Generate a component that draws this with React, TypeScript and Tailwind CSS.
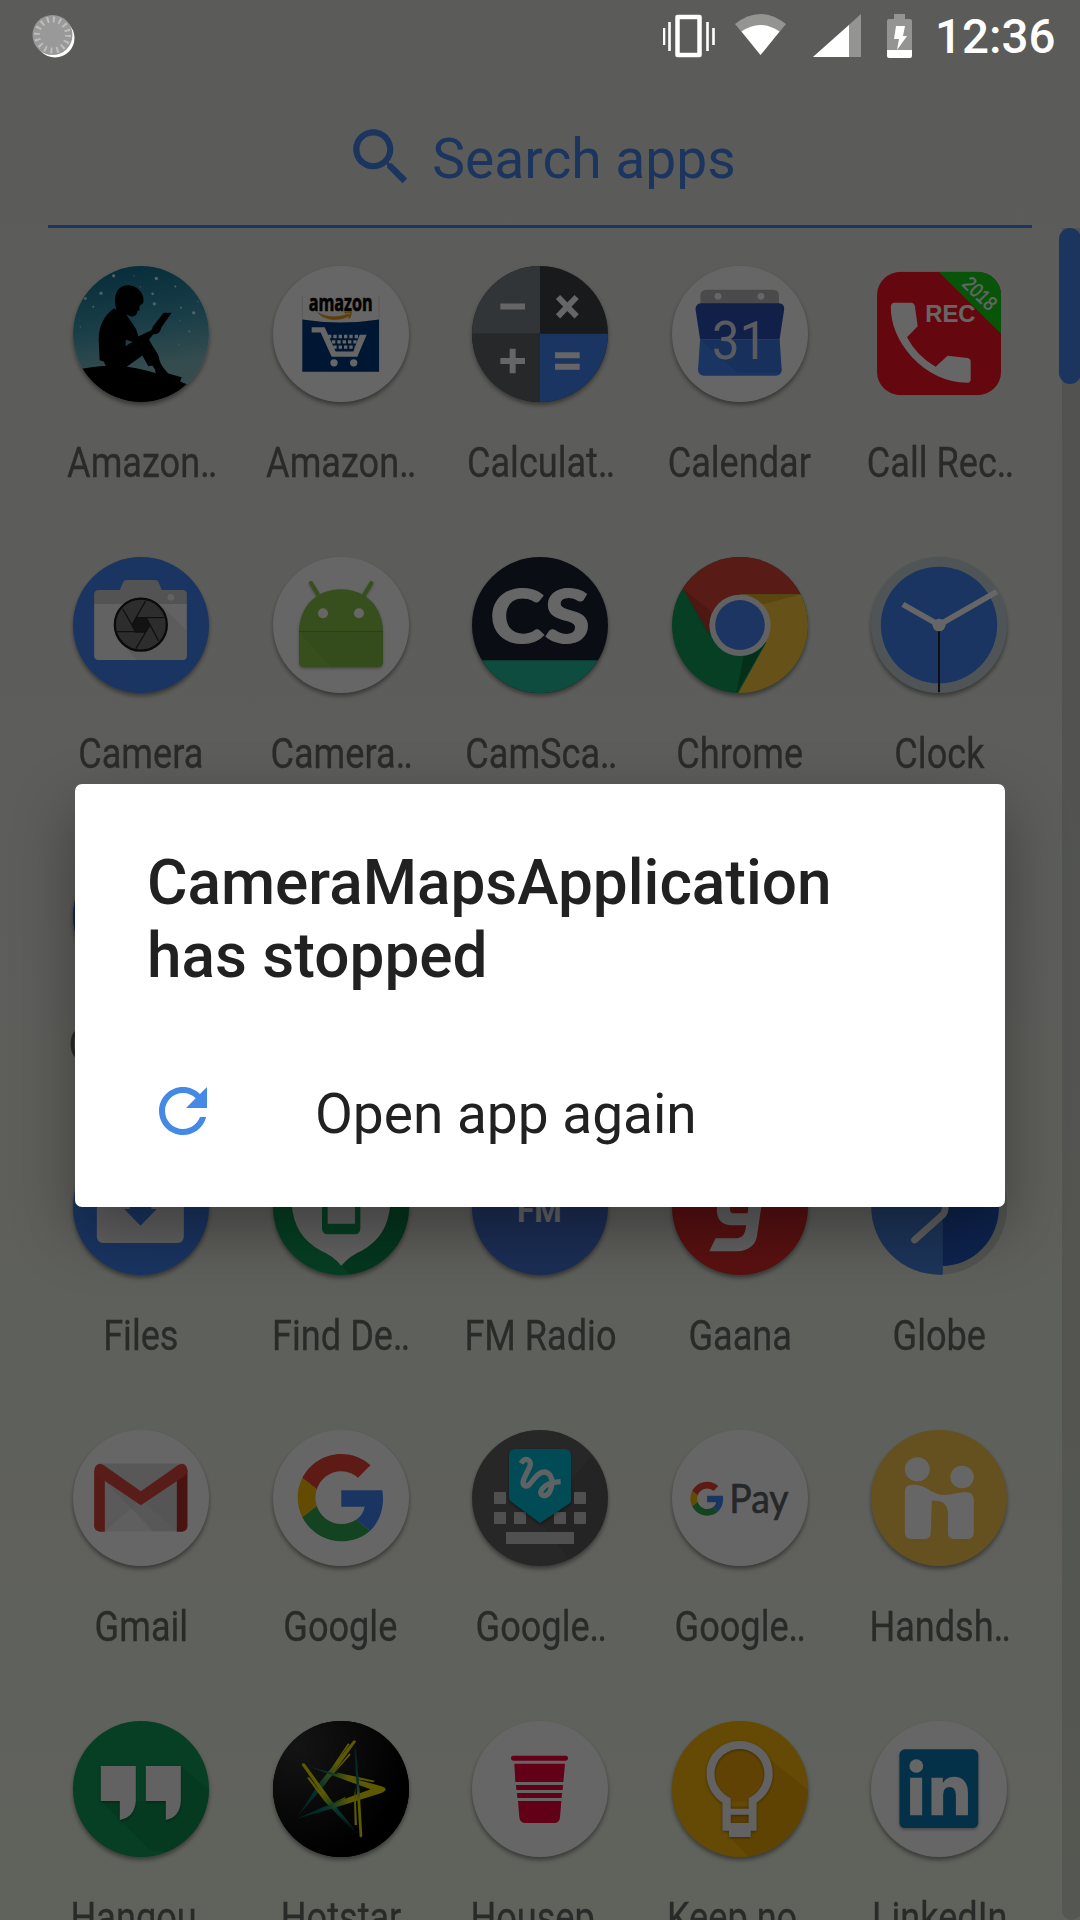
import React from "react";

type FrameProps = {
  x: number;
  y: number;
  bg?: string;
  wide?: boolean;
  bare?: boolean;
  children?: React.ReactNode;
};

/* Launcher icon: a 136px disc whose artwork is drawn on a fine grid with origin (x, y). */
function Disc({ x, y, bg = "#ffffff", wide, bare, children }: FrameProps) {
  const sx = wide ? 0.34439 : 0.33333;
  return (
    <div
      className={
        bare
          ? "size-[136px] shrink-0"
          : "size-[136px] shrink-0 overflow-hidden rounded-full shadow-[0_3px_4px_rgba(0,0,0,0.4)]"
      }
      style={bare ? undefined : { backgroundColor: bg }}
    >
      <svg viewBox="0 0 136 136" className="block size-full">
        <g transform={`scale(${sx} 0.33333) translate(${-x} ${-y})`}>{children}</g>
      </svg>
    </div>
  );
}

function GoogleMark() {
  return (
    <>
      <path fill="#EA4335" d="M24 9.5c3.54 0 6.71 1.22 9.21 3.6l6.85-6.85C35.9 2.38 30.47 0 24 0 14.62 0 6.51 5.38 2.56 13.22l7.98 6.19C12.43 13.72 17.74 9.5 24 9.5z" />
      <path fill="#4285F4" d="M46.98 24.55c0-1.57-.15-3.09-.38-4.55H24v9.02h12.94c-.58 2.96-2.26 5.48-4.78 7.18l7.73 6c4.51-4.18 7.09-10.36 7.09-17.65z" />
      <path fill="#FBBC05" d="M10.53 28.59c-.48-1.45-.76-2.99-.76-4.59s.27-3.14.76-4.59l-7.98-6.19C.92 16.46 0 20.12 0 24c0 3.88.92 7.54 2.56 10.78l7.97-6.19z" />
      <path fill="#34A853" d="M24 48c6.48 0 11.93-2.13 15.89-5.81l-7.73-6c-2.15 1.45-4.92 2.3-8.16 2.3-6.26 0-11.57-4.22-13.47-9.91l-7.98 6.19C6.51 42.62 14.62 48 24 48z" />
    </>
  );
}

const Kindle = () => (
  <Disc x={100} y={79.5}>
    <defs>
      <linearGradient id="sky" x1="0" y1="0" x2="0.15" y2="1">
        <stop offset="0" stopColor="#0a6a8e" />
        <stop offset="0.45" stopColor="#3c98b0" />
        <stop offset="0.8" stopColor="#84bfc6" />
      </linearGradient>
    </defs>
    <rect x="90" y="70" width="430" height="430" fill="url(#sky)" />
    <g fill="#d4f0f5">
      <circle cx="222" cy="109" r="5" /><circle cx="350" cy="117" r="5" /><circle cx="184" cy="161" r="5" />
      <circle cx="344" cy="193" r="5" /><circle cx="462" cy="220" r="5" /><circle cx="137" cy="177" r="4" />
      <circle cx="407" cy="141" r="3" /><circle cx="339" cy="163" r="4" /><circle cx="424" cy="205" r="3" />
      <circle cx="161" cy="202" r="3" /><circle cx="283" cy="109" r="2" /><circle cx="449" cy="276" r="3" />
      <circle cx="421" cy="244" r="2" /><circle cx="302" cy="142" r="2" /><circle cx="418" cy="316" r="2" />
      <circle cx="475" cy="187" r="2" /><circle cx="122" cy="262" r="2" />
    </g>
    <path d="M90 396Q200 368 290 386Q370 402 445 436L500 600H90Z" />
    <path d="M222 207L230 210C222 178 225 140 262 137C297 136 316 166 311 190L299 200L300 212L294 214C292 228 283 233 272 230L260 224C272 247 292 262 296 291L335 272L340 260L372 220H396L365 264C362 281 350 285 341 284L328 300C340 325 357 340 359 360C362 374 373 388 386 402L426 413L420 430L350 412L346 390L338 378L326 380L308 348L255 386H202L192 366L180 362L177 300C178 258 192 230 222 207Z" />
    <path d="M258 300L272 305Q284 306 270 312L258 320Z" fill="#4c98a6" />
  </Disc>
);

const AmazonShop = () => (
  <Disc x={697} y={79.5}>
    <path d="M785 168V397M1015 168V397" stroke="#e2e2e2" strokeWidth="3" />
    <path d="M785 240Q900 258 1015 240V397H785Z" fill="#023a80" />
    <text x="804" y="216" fontFamily="Open Sans" fontWeight="700" fontSize="68" textLength="192" lengthAdjust="spacingAndGlyphs" fill="#050505" stroke="#050505" strokeWidth="2">amazon</text>
    <path d="M831 219C855 246 900 245 927 228L924 223C898 234 860 237 831 219Z" fill="#f09a12" stroke="#f09a12" strokeWidth="2" />
    <path d="M912 221Q922 216 931 218Q932 228 924 237" fill="none" stroke="#f09a12" strokeWidth="5" />
    <path d="M813 263H852L885 336H938L957 286H978L950 352H873L840 279H813Z" fill="#fff" />
    <path d="M862 291H956M874 307H950M878 323H944" stroke="#fff" strokeWidth="10" strokeDasharray="10 6" />
    <circle cx="880" cy="370" r="11" fill="#fff" /><circle cx="939" cy="370" r="11" fill="#fff" />
  </Disc>
);

const Calculator = () => (
  <Disc x={1296} y={79} bg="#3f4144">
    <path d="M1290 70H1500V282H1290Z" fill="#7a8489" />
    <path d="M1290 282H1500V500H1290Z" fill="#626467" />
    <path d="M1500 282H1720V500H1500Z" fill="#4285f4" />
    <g stroke="#fff" strokeWidth="18" fill="none">
      <path d="M1381 200.500H1455M1381 364H1455M1418 327V401" />
      <path d="M1554 172L1610 230M1610 172L1554 230M1545 347H1619M1545 381H1619" />
    </g>
  </Disc>
);

const Calendar = () => (
  <Disc x={381.5} y={79} wide>
    <rect x="464" y="150" width="228" height="70" rx="16" fill="#b9b9b9" />
    <circle cx="515" cy="170" r="10" fill="#fff" /><circle cx="640" cy="170" r="10" fill="#fff" />
    <path d="M466 191H692Q709 192 707 210L694 299H463L450 210Q449 193 466 191Z" fill="#2a50b4" />
    <path d="M463 299H694L700 392Q699 407 684 408H473Q458 406 457 392Z" fill="#4285f4" />
    <path d="M463 299L572 400H684Q700 404 700 392L694 299Z" fill="#1c50a8" opacity=".18" />
    <text x="498" y="357" fontFamily="Roboto" fontWeight="400" fontSize="160" textLength="160" lengthAdjust="spacingAndGlyphs" fill="#dfe3ec">31</text>
  </Disc>
);

const CallRecorder = () => (
  <Disc x={961.5} y={79} wide bare>
    <clipPath id="rec"><rect x="979" y="96" width="360" height="371" rx="70" /></clipPath>
    <g clipPath="url(#rec)">
      <rect x="979" y="96" width="360" height="371" fill="#fd1224" />
      <path d="M1158 96H1340V283Z" fill="#14d314" />
      <text x="1119" y="248" fontFamily="Liberation Sans" fontWeight="700" fontSize="72" textLength="146" lengthAdjust="spacingAndGlyphs" fill="#fff">REC</text>
      <text transform="translate(1223 136) rotate(45)" fontFamily="Liberation Sans" fontSize="60" textLength="113" lengthAdjust="spacingAndGlyphs" fill="#fff" stroke="#fff" strokeWidth="1">2018</text>
      <path d="M1030 189H1077Q1088 190 1089 200L1097 260L1066 293Q1095 350 1149 381L1184 348L1242 355Q1251 357 1251 366V420Q1250 430 1240 429Q1150 428 1080 352Q1018 280 1019 200Q1020 190 1030 189Z" fill="#fff" />
    </g>
  </Disc>
);

const Camera = () => (
  <Disc x={99.5} y={81} bg="#4285f4">
    <path d="M240 180L250 156Q253 150 260 150H346Q353 150 356 156L366 180H430Q441 181 441 192V222H163V192Q164 181 175 180Z" fill="#cfcfcf" />
    <path d="M163 222H441V378Q440 389 430 390H175Q164 389 163 378Z" fill="#f5f5f5" />
    <path d="M370 230L441 303V378Q440 389 430 390H290L255 350Z" fill="#d8d8d8" opacity=".55" />
    <circle cx="393" cy="202" r="10" fill="#f5f5f5" />
    <circle cx="303" cy="284" r="78" fill="#707070" stroke="#191919" strokeWidth="7" />
    <path d="M275 284L289 261H316L331 284L317 308H289Z" fill="#303030" />
    <path d="M318 212L277 284M374 263H287M356 332L318 261M288 356L331 284M231 305H318M249 237L289 308" stroke="#2a2a2a" strokeWidth="4" fill="none" />
  </Disc>
);

const CameraMaps = () => (
  <Disc x={696} y={80}>
    <g style={{ filter: "drop-shadow(0 4px 4px rgba(0,0,0,.3))" }}>
      <path d="M810 158L835 199M991 158L966 199" stroke="#8bc34a" strokeWidth="12" strokeLinecap="round" />
      <path d="M774 303C776 225 830 177 900 177S1024 225 1026 303V396Q1025 411 1011 411H789Q775 411 774 396Z" fill="#8bc34a" />
    </g>
    <path d="M774 304L870 411H1011Q1025 411 1026 396V304Z" fill="#5f9a2e" opacity=".18" />
    <path d="M774 303H1026" stroke="#679a38" strokeWidth="3" />
    <circle cx="846" cy="249" r="15" fill="#fff" /><circle cx="954" cy="249" r="15" fill="#fff" />
  </Disc>
);

const CamScanner = () => (
  <Disc x={1296} y={81} bg="#1a2533">
    <rect x="1280" y="391" width="440" height="110" fill="#27bfa0" />
    <text x="1350" y="339" fontFamily="Lato" fontWeight="900" fontSize="222" textLength="300" lengthAdjust="spacingAndGlyphs" fill="#fff" stroke="#fff" strokeWidth="3">CS</text>
  </Disc>
);

const Chrome = () => (
  <Disc x={381.5} y={81} wide bg="#0f9d58">
    <path d="M414 176L490 310L579 193H756L800 60H380Z" fill="#db4437" />
    <path d="M579 193H756L800 300L700 500H568L655 338Z" fill="#ffcd40" />
    <path d="M600 193H756L640 225Z" fill="#c88a10" opacity=".45" />
    <path d="M414 176L490 320L500 250Z" fill="#9a2a20" opacity=".35" />
    <path d="M655 335L568 490L590 375Z" fill="#05542c" opacity=".5" />
    <ellipse cx="579" cy="286" rx="89" ry="92" fill="#f5f5f5" />
    <ellipse cx="579" cy="285" rx="72" ry="75" fill="#4a86f5" />
  </Disc>
);

const Clock = () => (
  <Disc x={961.5} y={81} wide bg="#c6d2d8">
    <ellipse cx="1159" cy="285" rx="169" ry="175" fill="#4285f4" />
    <path d="M1327 185L1159 285L1054 223" fill="none" stroke="#fff" strokeWidth="17" />
    <path d="M1159 285V487" stroke="#26262b" strokeWidth="6" />
    <circle cx="1159" cy="285" r="19" fill="#fff" />
  </Disc>
);

const Contacts = () => <Disc x={0} y={0} bg="#2a5fd0" />;

const Files = () => (
  <Disc x={99.5} y={-151} bg="#4285f4">
    <path d="M171 -70H432V142Q431 160 413 161H190Q172 160 171 142Z" fill="#f2f2f2" />
    <path d="M270 0H334V59H351L302 109L253 59H270Z" fill="#4285f4" />
  </Disc>
);

const FindDevice = () => (
  <Disc x={696} y={-153} bg="#0f9d58">
    <path d="M901 227L1060 385L1110 200V50H1040Z" fill="#08703c" opacity=".45" />
    <path d="M752 40Q758 140 840 182Q875 196 901 227Q927 196 962 182Q1042 140 1048 40Z" fill="#f5f5f5" />
    <path d="M843 20H958V116Q957 132 942 133H860Q844 132 843 116ZM860 20V101H942V20Z" fill="#0f9d58" fillRule="evenodd" />
  </Disc>
);

const FmRadio = () => (
  <Disc x={1296} y={-151} bg="#4873d8">
    <text x="1431" y="97" fontFamily="Roboto" fontWeight="700" fontSize="100" textLength="134" lengthAdjust="spacingAndGlyphs" fill="#fff">FM</text>
  </Disc>
);

const Gaana = () => (
  <Disc x={381.5} y={-153} wide bg="#e02c2c">
    <path d="M512 0V66Q515 104 555 106H597Q594 143 572 145H508L490 184H570Q620 180 628 140L648 0H611L601 70H562Q549 70 550 56V0Z" fill="#f5f5f5" />
  </Disc>
);

const Globe = () => (
  <Disc x={961.5} y={-153} wide bare>
    <ellipse cx="1160" cy="50" rx="197" ry="204" fill="#000" opacity=".12" />
    <ellipse cx="1168" cy="52" rx="165" ry="176" fill="#2459c2" />
    <path d="M1170 -154H1160A198 204 0 0 0 1160 254H1170Z" fill="#4a86e0" />
    <path d="M1088 150L1172 72Q1180 60 1176 30" fill="none" stroke="#f5f5f5" strokeWidth="20" strokeLinecap="round" />
  </Disc>
);

const Gmail = () => (
  <Disc x={99.5} y={61}>
    <path d="M178 162H430V365H178Z" fill="#e2e2e2" />
    <path d="M195 365L303 270L411 365Z" fill="#eeeeee" />
    <path d="M178 162H430L303 250Z" fill="#dcdcdc" />
    <path d="M195 215L340 365H411V210L303 286Z" fill="#bdbdbd" opacity=".35" />
    <path d="M163 185H195V366H180Q164 365 163 350Z" fill="#d5443a" />
    <path d="M411 200L443 180V350Q442 365 427 366H411Z" fill="#b5302a" />
    <path d="M163 184Q164 165 180 162Q185 162 192 167L303 245L414 167Q422 162 430 163Q442 166 443 184Q442 194 433 200L303 287L174 200Q164 194 163 184Z" fill="#db4a3f" />
  </Disc>
);

const Google = () => (
  <Disc x={696} y={61}>
    <g transform="translate(770 133) scale(5.45)"><GoogleMark /></g>
  </Disc>
);

const HandwritingInput = () => (
  <Disc x={1296} y={60} bg="#626262">
    <path d="M1650 140L1720 200V480H1610L1500 335Z" fill="#000" opacity=".08" />
    <g fill="#c8c8c8">
      <rect x="1362" y="246" width="36" height="36" rx="3" /><rect x="1362" y="306" width="36" height="36" rx="3" />
      <rect x="1422" y="306" width="36" height="36" rx="3" /><rect x="1542" y="306" width="36" height="36" rx="3" />
      <rect x="1602" y="306" width="36" height="36" rx="3" /><rect x="1602" y="246" width="36" height="36" rx="3" />
      <rect x="1398" y="366" width="204" height="36" rx="3" />
    </g>
    <path d="M1427 117H1574Q1592 118 1593 136V272Q1592 278 1586 282L1500 339L1414 275Q1408 271 1407 263V136Q1408 118 1427 117Z" fill="#00bcd4" style={{ filter: "drop-shadow(0 5px 5px rgba(0,0,0,.4))" }} />
    <path d="M1443 160C1455 140 1476 148 1470 168C1462 190 1442 215 1452 226C1472 240 1482 185 1514 186C1546 190 1540 250 1515 257C1490 258 1500 218 1562 215" fill="none" stroke="#e8f4f5" strokeWidth="16" />
  </Disc>
);

const GooglePay = () => (
  <Disc x={381.5} y={61} wide>
    <g transform="translate(435 216) scale(2.02 2.125)"><GoogleMark /></g>
    <text x="548" y="311" fontFamily="Lato" fontSize="120" textLength="172" lengthAdjust="spacingAndGlyphs" fill="#5f6368" stroke="#5f6368" strokeWidth="2">Pay</text>
  </Disc>
);

const Handshake = () => (
  <Disc x={961.5} y={60} wide bg="#fdcb52">
    <g fill="#fff">
      <circle cx="1096" cy="178" r="36" /><circle cx="1226" cy="201" r="34" />
      <path d="M1080 224H1090C1125 226 1138 255 1175 255C1200 255 1210 247 1240 247Q1259 249 1260 268V370Q1259 386 1242 387H1202Q1186 386 1185 370V310C1184 285 1172 272 1150 272H1138L1135 370Q1134 386 1118 387H1078Q1061 386 1060 370V242Q1061 225 1080 224Z" />
    </g>
  </Disc>
);

const Hangouts = () => (
  <Disc x={99.5} y={63} bg="#109d59">
    <path d="M183 303L330 450L520 480V280L423 198V303Z" fill="#0a7040" opacity=".3" />
    <path d="M183 198H288V303Q284 352 240 360V303H183ZM318 198H423V303Q420 352 378 360V303H318Z" fill="#f5f5f5" style={{ filter: "drop-shadow(0 4px 3px rgba(0,0,0,.3))" }} />
  </Disc>
);

const Hotstar = () => (
  <Disc x={697} y={63} bg="#050505">
    <defs>
      <radialGradient id="night" cx=".2" cy=".2" r=".8"><stop offset="0" stopColor="#333" /><stop offset="1" stopColor="#000" /></radialGradient>
      <linearGradient id="s1" gradientUnits="userSpaceOnUse" x1="942" y1="124" x2="775" y2="345"><stop offset=".3" stopColor="#e8df00" /><stop offset=".62" stopColor="#0b8375" /><stop offset="1" stopColor="#064a48" /></linearGradient>
      <linearGradient id="s2" gradientUnits="userSpaceOnUse" x1="786" y1="192" x2="950" y2="400"><stop offset=".4" stopColor="#e8df00" /><stop offset=".65" stopColor="#0b8375" /><stop offset="1" stopColor="#064a48" /></linearGradient>
      <linearGradient id="s3" gradientUnits="userSpaceOnUse" x1="1030" y1="268" x2="768" y2="268"><stop offset=".4" stopColor="#e8df00" /><stop offset=".65" stopColor="#0b8375" /><stop offset="1" stopColor="#064a48" /></linearGradient>
      <linearGradient id="s4" gradientUnits="userSpaceOnUse" x1="0" y1="410" x2="0" y2="145"><stop offset=".4" stopColor="#e8df00" /><stop offset=".6" stopColor="#0b8375" /><stop offset="1" stopColor="#064a48" /></linearGradient>
    </defs>
    <rect x="690" y="55" width="420" height="430" fill="url(#night)" />
    <path d="M939 121L947 124L850 258L772 348L835 250ZM922 130L927 133L860 222ZM926 160L930 164L840 265Z" fill="url(#s1)" />
    <path d="M783 194Q786 187 793 192L880 312L952 402L870 318ZM799 233L806 232L865 308L937 392L850 302Z" fill="url(#s2)" />
    <path d="M801 198L1020 258Q1035 262 1035 268T1020 280L870 327L766 357L855 318L990 268L880 228ZM885 217L1002 242L998 247L900 228ZM915 290L850 322L912 297Z" fill="url(#s3)" />
    <path d="M941 145H946L957 270L965 408Q961 415 957 410L949 280ZM944 260L949 375L942 376L940 290Z" fill="url(#s4)" />
  </Disc>
);

const Housing = () => (
  <Disc x={1296} y={63}>
    <g fill="#f5003d">
      <rect x="1413" y="167" width="171" height="15" rx="7" />
      <path d="M1423 191H1575L1570 246H1426ZM1428 255H1569L1568 270H1429ZM1431 279H1566L1565 294H1432ZM1434 303H1564L1560 352Q1558 368 1545 369H1454Q1440 368 1438 352Z" />
    </g>
  </Disc>
);

const Keep = () => (
  <Disc x={381.5} y={64} wide bg="#f9b90c">
    <path d="M655 170L800 290V480H610L547 410L630 390V300Z" fill="#d88c00" opacity=".35" />
    <circle cx="578" cy="226" r="82" fill="#f0a80c" />
    <path d="M552 320H604V372H552Z" fill="#e09a0c" />
    <path d="M528 393V309C500 290 482 258 482 222C482 165 525 124 578 124S674 165 674 222C674 258 655 290 627 309V393H610V412H547V393ZM552 327H604V296C632 282 650 255 650 224C650 180 618 148 578 148S505 180 505 224C505 255 524 282 552 296ZM552 345V370H604V345Z" fill="#f5f5f5" fillRule="evenodd" style={{ filter: "drop-shadow(0 3px 4px rgba(0,0,0,.35))" }} />
  </Disc>
);

const LinkedIn = () => (
  <Disc x={961.5} y={64} wide>
    <rect x="1044" y="149" width="229" height="236" rx="16" fill="#0d7bb5" style={{ filter: "drop-shadow(0 5px 5px rgba(0,0,0,.3))" }} />
    <g fill="#fff">
      <circle cx="1093" cy="199" r="20" />
      <path d="M1075 234H1110V347H1075ZM1137 234H1170V250Q1180 231 1204 231Q1243 233 1243 280V347H1208V285Q1207 262 1190 262Q1171 263 1171 285V347H1137Z" />
    </g>
  </Disc>
);

type App = { icon: React.ReactNode; name: string; cut?: boolean };

const apps: (App | null)[] = [
  { icon: <Kindle />, name: "Amazon", cut: true },
  { icon: <AmazonShop />, name: "Amazon", cut: true },
  { icon: <Calculator />, name: "Calculat", cut: true },
  { icon: <Calendar />, name: "Calendar" },
  { icon: <CallRecorder />, name: "Call Rec", cut: true },
  { icon: <Camera />, name: "Camera" },
  { icon: <CameraMaps />, name: "Camera", cut: true },
  { icon: <CamScanner />, name: "CamSca", cut: true },
  { icon: <Chrome />, name: "Chrome" },
  { icon: <Clock />, name: "Clock" },
  { icon: <Contacts />, name: "Contacts" },
  null,
  null,
  null,
  null,
  { icon: <Files />, name: "Files" },
  { icon: <FindDevice />, name: "Find De", cut: true },
  { icon: <FmRadio />, name: "FM Radio" },
  { icon: <Gaana />, name: "Gaana" },
  { icon: <Globe />, name: "Globe" },
  { icon: <Gmail />, name: "Gmail" },
  { icon: <Google />, name: "Google" },
  { icon: <HandwritingInput />, name: "Google", cut: true },
  { icon: <GooglePay />, name: "Google", cut: true },
  { icon: <Handshake />, name: "Handsh", cut: true },
  { icon: <Hangouts />, name: "Hangou", cut: true },
  { icon: <Hotstar />, name: "Hotstar" },
  { icon: <Housing />, name: "Housep", cut: true },
  { icon: <Keep />, name: "Keep no", cut: true },
  { icon: <LinkedIn />, name: "LinkedIn" },
];

function AppCell({ app }: { app: App | null }) {
  return (
    <div className="flex h-[291px] flex-col items-center">
      {app && (
        <>
          {app.icon}
          <div className="mt-[36px] scale-x-[0.86] text-[42px] leading-[50px] whitespace-nowrap text-[#696967] [-webkit-text-stroke:0.3px_#696967]">
            {app.name}
            {app.cut && <span className="tracking-[-2px]">..</span>}
          </div>
        </>
      )}
    </div>
  );
}

function Launcher() {
  return (
    <div className="flex h-full flex-col bg-linear-to-b from-[#e3e3e1] to-[#f0f5e6]">
      <header className="mx-12 mt-[72px] flex h-[156px] shrink-0 items-center justify-center border-b-[3px] border-[#4486ea] pt-[16px] text-[#4486ea]">
        <svg viewBox="0 0 24 24" className="mr-[14px] size-[74px]" fill="currentColor">
          <path d="M15.500 14h-.79l-.28-.27C15.410 12.590 16 11.110 16 9.500 16 5.910 13.090 3 9.500 3S3 5.910 3 9.500 5.910 16 9.500 16c1.610 0 3.090-.59 4.230-1.570l.27.28v.79l5 4.990L20.490 19l-4.990-5zm-6 0C7.010 14 5 11.990 5 9.500S7.010 5 9.500 5 14 7.010 14 9.500 11.990 14 9.500 14z" />
        </svg>
        <span className="pt-[6px] text-[55.2px] leading-none whitespace-nowrap">Search apps</span>
      </header>
      <div className="flex min-h-0 flex-1">
        <main className="ml-[41.2px] grid w-[998px] shrink-0 grid-cols-5 content-start pt-[38px]">
          {apps.map((app, i) => (
            <AppCell key={i} app={app} />
          ))}
        </main>
        <div className="flex flex-1 justify-end">
          <div className="-mr-px h-full w-[19px] rounded-b-[9px] bg-black/11">
            <div className="-ml-[3px] h-[156px] w-[22px] rounded-full bg-[#4486ea]" />
          </div>
        </div>
      </div>
    </div>
  );
}

function StatusBar() {
  return (
    <div className="absolute inset-x-0 top-0 flex h-[72px] items-center pl-[32px] text-white">
      <svg viewBox="0 0 44 46" className="h-[46px] w-[44px]">
        <circle cx="23" cy="25" r="19.500" fill="#fff" />
        <circle cx="20.500" cy="22" r="20" fill="#999" />
        <circle cx="20.500" cy="22" r="15.500" fill="none" stroke="#bdbdbd" strokeWidth="6" strokeDasharray="2 4.080" />
      </svg>
      <svg viewBox="0 0 250 44" className="ml-[587px] h-[44px] w-[250px]">
        <path d="M14.500 3h22v38h-22z" fill="none" stroke="#fff" strokeWidth="4.500" strokeLinejoin="round" />
        <path d="M1 14v17M6.500 8v29M44.500 8v29M50.500 14v17" stroke="#fff" strokeWidth="2.600" />
        <path d="M72 10Q97 -10 123 10L97.500 41Z" fill="#fff" opacity=".35" />
        <path d="M78.500 17.500Q97 4.500 116.500 17.500L97.500 41Z" fill="#fff" />
        <path d="M150 43L198 0V43Z" fill="#fff" opacity=".35" />
        <path d="M150 43L186 11V43Z" fill="#fff" />
        <path d="M231 0h11v5h5q2 0 2 2v29h-25V7q0-2 2-2h5z" fill="#fff" opacity=".35" />
        <path d="M224 36h25v6q0 2-2 2h-21q-2 0-2-2z" fill="#fff" />
        <path d="M233 12h9l-2 10h4l-10 14 2-11h-5z" fill="#fff" />
      </svg>
      <span className="ml-[22px] pt-[4px] text-[47.5px] leading-none font-medium">12:36</span>
    </div>
  );
}

function CrashDialog() {
  return (
    <div className="absolute top-[784px] left-[75px] flex h-[423px] w-[930px] flex-col rounded-[7px] bg-white pt-[62px] pl-[72px] text-[#212121] shadow-[0_24px_60px_rgba(0,0,0,0.35)]">
      <h1 className="w-[760px] text-[62.1px] leading-[73px] font-medium">
        CameraMapsApplication
        <br />
        has stopped
      </h1>
      <button className="mt-[83px] flex items-center text-left">
        <svg viewBox="0 0 24 24" className="size-[72px]" fill="#4589e6">
          <path d="M17.650 6.350C16.200 4.900 14.210 4 12 4c-4.420 0-7.990 3.580-7.990 8s3.570 8 7.990 8c3.730 0 6.840-2.550 7.730-6h-2.080c-.82 2.330-3.040 4-5.650 4-3.310 0-6-2.690-6-6s2.690-6 6-6c1.660 0 3.140.69 4.220 1.780L13 11h7V4l-2.350 2.350z" />
        </svg>
        <span className="ml-[96px] pt-[5px] text-[55px] leading-[64px]">Open app again</span>
      </button>
    </div>
  );
}

export default function App() {
  return (
    <div className="relative h-[1920px] w-[1080px] overflow-hidden font-['Roboto',sans-serif]">
      <Launcher />
      <div className="absolute inset-0 bg-black/60" />
      <StatusBar />
      <CrashDialog />
    </div>
  );
}
